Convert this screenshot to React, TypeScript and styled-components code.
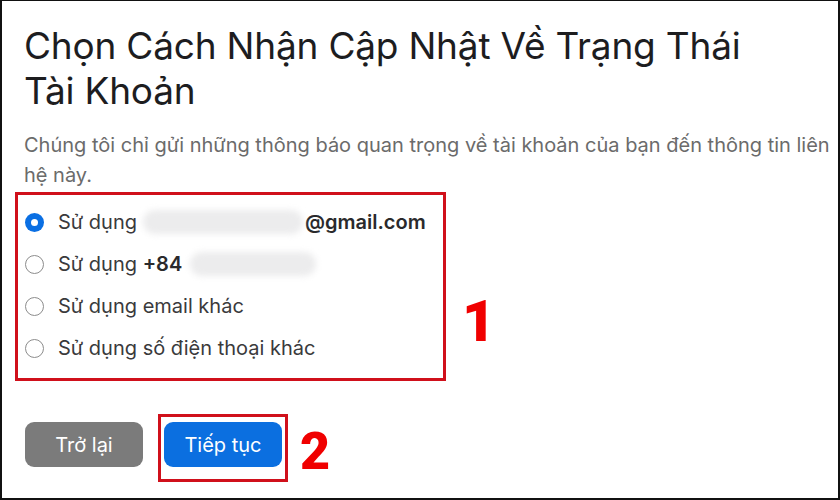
import React from 'react';
import styled, { createGlobalStyle } from 'styled-components';

const GlobalStyle = createGlobalStyle`
  html, body {
    margin: 0;
    padding: 0;
    background: #ffffff;
  }
  * {
    box-sizing: border-box;
  }
`;

const Frame = styled.div`
  width: 840px;
  height: 500px;
  overflow: hidden;
  background: #ffffff;
  border-style: solid;
  border-color: #111111;
  border-width: 1px 2px 2px 2px;
  font-family: Inter, 'Noto Sans', sans-serif;
`;

const Content = styled.div`
  padding-left: 22px;
`;

const Title = styled.h1`
  margin: 22px 0 0;
  font-size: 37px;
  line-height: 45px;
  font-weight: 400;
  letter-spacing: -0.2px;
  color: #1d1d1f;
`;

const Lead = styled.p`
  width: 812px;
  margin: 17px 0 0;
  font-size: 20px;
  line-height: 30px;
  color: #6b6b6b;
`;

const AnnotatedRow = styled.div`
  display: flex;
  align-items: flex-start;
`;

const Highlight = styled.div<{ $pad: string }>`
  border: 3px solid #d0101b;
  padding: ${p => p.$pad};
`;

const OptionBox = styled(Highlight)`
  width: 431px;
  margin: 2px 0 0 -9px;
  display: flex;
  flex-direction: column;
`;

const Marker = styled.div<{ $size: number; $top: number; $left: number }>`
  font-family: Roboto, 'Liberation Sans', sans-serif;
  font-weight: 900;
  font-size: ${p => p.$size}px;
  line-height: 1;
  color: #f00000;
  margin-top: ${p => p.$top}px;
  margin-left: ${p => p.$left}px;
`;

const Option = styled.label`
  display: flex;
  align-items: center;
  height: 42px;
  gap: 14px;
  font-size: 20px;
  color: #3a3a3c;
  cursor: pointer;
`;

const Radio = styled.span<{ $checked?: boolean }>`
  flex: none;
  width: 19px;
  height: 19px;
  border-radius: 50%;
  display: flex;
  align-items: center;
  justify-content: center;
  background: ${p => (p.$checked ? '#0a6fe3' : '#ffffff')};
  border: ${p => (p.$checked ? 'none' : '1.5px solid #8c8c8c')};

  &::after {
    content: '';
    display: ${p => (p.$checked ? 'block' : 'none')};
    width: 7px;
    height: 7px;
    border-radius: 50%;
    background: #ffffff;
  }
`;

const LabelText = styled.span`
  display: flex;
  align-items: center;
  white-space: nowrap;
`;

const Strong = styled.b`
  font-weight: 600;
  color: #2a2a2c;
`;

const Redacted = styled.span<{ $width: number; $ml: number }>`
  display: inline-block;
  width: ${p => p.$width}px;
  height: 24px;
  margin-left: ${p => p.$ml}px;
  margin-right: 2px;
  border-radius: 12px;
  background: #ececed;
  filter: blur(3px);
`;

const Actions = styled.div`
  display: flex;
  align-items: flex-start;
  margin-top: 33px;
  margin-left: 1px;
`;

const Button = styled.button<{ $primary?: boolean }>`
  width: 118px;
  height: 45px;
  border: none;
  border-radius: 9px;
  font-family: Inter, 'Noto Sans', sans-serif;
  font-size: 20px;
  color: #ffffff;
  background: ${p => (p.$primary ? '#0b6fe0' : '#7b7b7b')};
  cursor: pointer;
`;

const BackButton = styled(Button)`
  margin-top: 8px;
  margin-right: 15px;
`;

const options = [
  { id: 'email', checked: true },
  { id: 'phone', checked: false },
  { id: 'other-email', checked: false },
  { id: 'other-phone', checked: false },
];

export default function App() {
  const renderLabel = (id: string) => {
    switch (id) {
      case 'email':
        return (
          <>
            Sử dụng <Redacted $width={160} $ml={6} />
            <Strong>@gmail.com</Strong>
          </>
        );
      case 'phone':
        return (
          <>
            Sử dụng&nbsp;<Strong>+84</Strong>
            <Redacted $width={126} $ml={8} />
          </>
        );
      case 'other-email':
        return <>Sử dụng email khác</>;
      default:
        return <>Sử dụng số điện thoại khác</>;
    }
  };

  return (
    <>
      <GlobalStyle />
      <Frame>
        <Content>
          <Title>
            Chọn Cách Nhận Cập Nhật Về Trạng Thái
            <br />
            Tài Khoản
          </Title>
          <Lead>
            Chúng tôi chỉ gửi những thông báo quan trọng về tài khoản của bạn đến thông tin liên hệ này.
          </Lead>
          <AnnotatedRow>
            <OptionBox $pad="6px 0 9px 7px">
              {options.map(o => (
                <Option key={o.id}>
                  <Radio $checked={o.checked} />
                  <LabelText>{renderLabel(o.id)}</LabelText>
                </Option>
              ))}
            </OptionBox>
            <Marker $size={58} $top={102} $left={16}>
              1
            </Marker>
          </AnnotatedRow>
          <Actions>
            <BackButton>Trở lại</BackButton>
            <Highlight $pad="5px 3px 12px 3px">
              <Button $primary>Tiếp tục</Button>
            </Highlight>
            <Marker $size={52} $top={12} $left={12}>
              2
            </Marker>
          </Actions>
        </Content>
      </Frame>
    </>
  );
}
